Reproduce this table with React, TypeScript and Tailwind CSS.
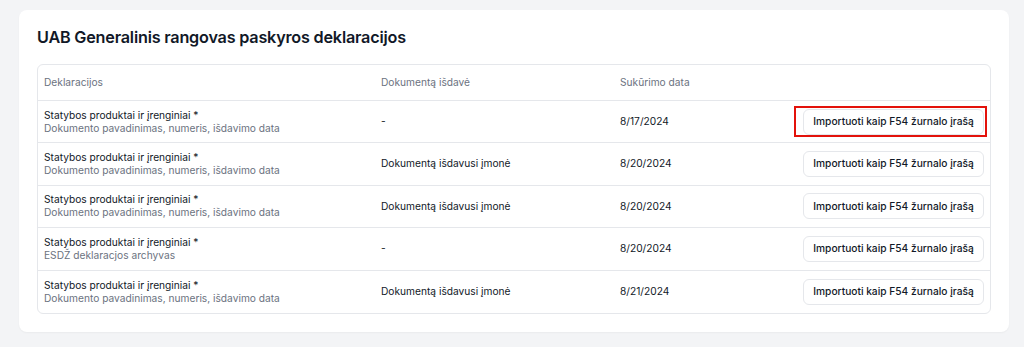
import React from "react";

type Row = {
  title: string;
  subtitle: string;
  issuer: string;
  date: string;
  highlighted?: boolean;
};

const rows: Row[] = [
  {
    title: "Statybos produktai ir įrenginiai *",
    subtitle: "Dokumento pavadinimas, numeris, išdavimo data",
    issuer: "-",
    date: "8/17/2024",
    highlighted: true,
  },
  {
    title: "Statybos produktai ir įrenginiai *",
    subtitle: "Dokumento pavadinimas, numeris, išdavimo data",
    issuer: "Dokumentą išdavusi įmonė",
    date: "8/20/2024",
  },
  {
    title: "Statybos produktai ir įrenginiai *",
    subtitle: "Dokumento pavadinimas, numeris, išdavimo data",
    issuer: "Dokumentą išdavusi įmonė",
    date: "8/20/2024",
  },
  {
    title: "Statybos produktai ir įrenginiai *",
    subtitle: "ESDŽ deklaracjos archyvas",
    issuer: "-",
    date: "8/20/2024",
  },
  {
    title: "Statybos produktai ir įrenginiai *",
    subtitle: "Dokumento pavadinimas, numeris, išdavimo data",
    issuer: "Dokumentą išdavusi įmonė",
    date: "8/21/2024",
  },
];

const cols = "grid grid-cols-[337px_239px_1fr_auto] items-center";

const App: React.FC = () => {
  return (
    <div
      className="min-h-[347px] bg-[#f3f4f6] pl-[19px] pt-[10px] pb-4"
      style={{ fontFamily: "Inter, 'Noto Sans', sans-serif" }}
    >
      <div className="w-[990px] rounded-lg bg-white px-[18px] pt-[16px] pb-[18px] shadow-[0_1px_2px_rgba(0,0,0,0.04)]">
        <h1 className="mb-[16px] text-[16.2px] font-semibold leading-[22px] tracking-[-0.2px] text-[#111827]">
          UAB Generalinis rangovas paskyros deklaracijos
        </h1>
        <div className="rounded-md border border-[#e5e7eb]">
          <div className={`${cols} h-[36px] border-b border-[#e5e7eb] px-[6px] text-[10.2px] text-[#6b7280]`}>
            <div>Deklaracijos</div>
            <div>Dokumentą išdavė</div>
            <div>Sukūrimo data</div>
            <div />
          </div>
          {rows.map((r, i) => (
            <div
              key={i}
              className={`${cols} h-[42.4px] px-[6px] text-[10.2px] ${
                i < rows.length - 1 ? "border-b border-[#e5e7eb]" : ""
              }`}
            >
              <div className="leading-[13px]">
                <div className="text-[#111827]">{r.title}</div>
                <div className="text-[#6b7280]">{r.subtitle}</div>
              </div>
              <div className="text-[#111827]">{r.issuer}</div>
              <div className="text-[#111827]">{r.date}</div>
              <div className="relative">
                <button className="h-[26px] w-[181px] whitespace-nowrap rounded-md border border-[#e5e7eb] bg-white text-[10.2px] font-medium text-[#111827]">
                  Importuoti kaip F54 žurnalo įrašą
                </button>
                {r.highlighted && (
                  <div className="pointer-events-none absolute -top-[3px] -bottom-[2px] -left-[9px] -right-[3px] border-2 border-[#e3120b]" />
                )}
              </div>
            </div>
          ))}
        </div>
      </div>
    </div>
  );
};

export default App;
